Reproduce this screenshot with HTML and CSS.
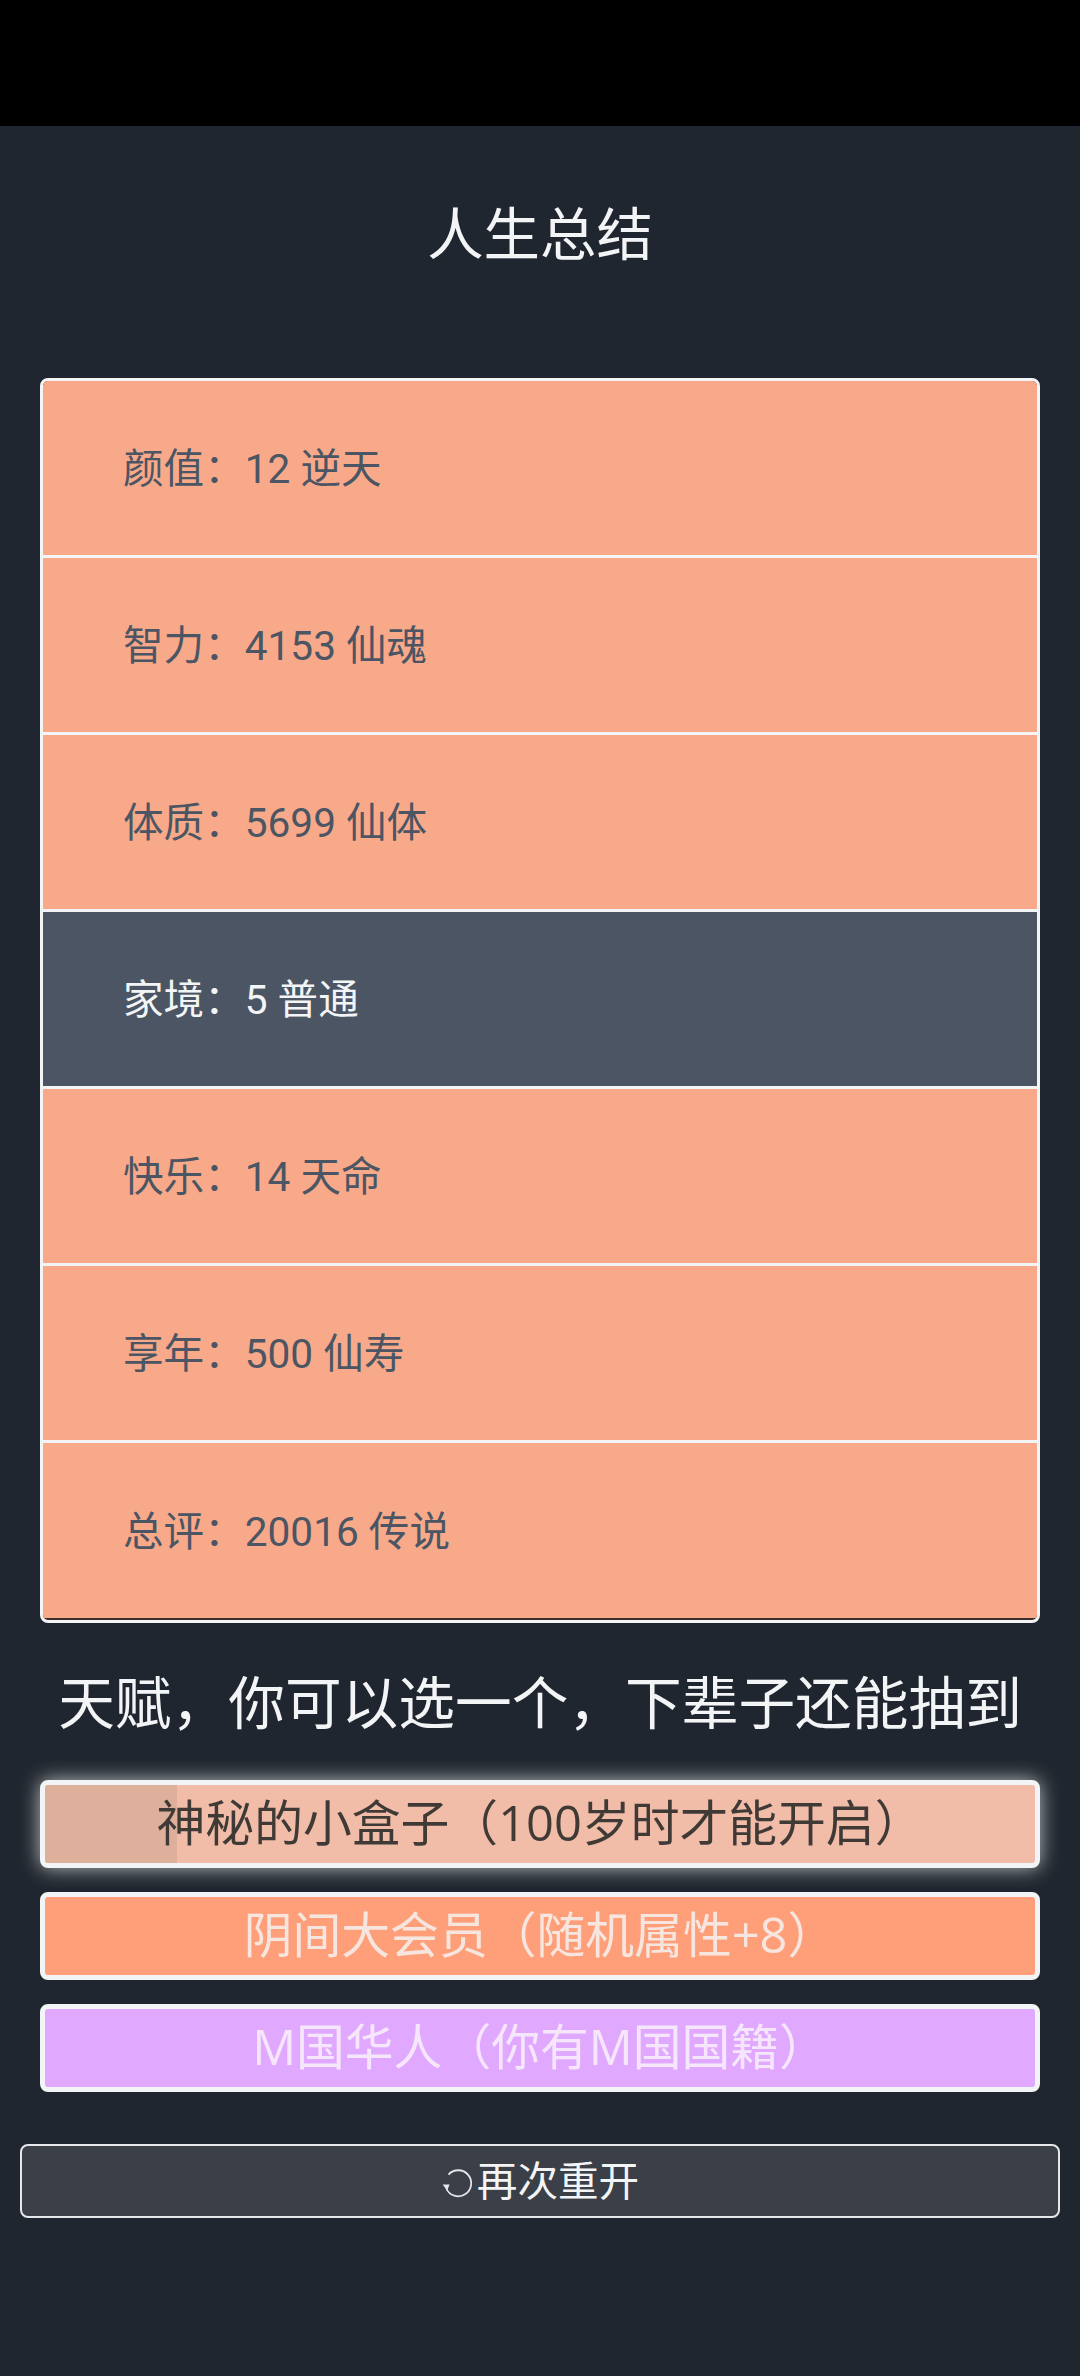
FILE: index.html
```html
<!DOCTYPE html>
<html lang="zh-CN">
<head>
<meta charset="utf-8">
<title>人生总结</title>
<link rel="stylesheet" href="styles.css">
</head>
<body>
<div class="statusbar"></div>
<main class="page">
  <h1 class="title">人生总结</h1>
  <ul class="summary">
    <li class="row">颜值&#xFF1A;12 逆天</li>
    <li class="row">智力&#xFF1A;4153 仙魂</li>
    <li class="row">体质&#xFF1A;5699 仙体</li>
    <li class="row row-dark">家境&#xFF1A;5 普通</li>
    <li class="row">快乐&#xFF1A;14 天命</li>
    <li class="row">享年&#xFF1A;500 仙寿</li>
    <li class="row">总评&#xFF1A;20016 传说</li>
  </ul>
  <h2 class="subtitle">天赋&#xFF0C;你可以选一个&#xFF0C;下辈子还能抽到</h2>
  <div class="talents">
    <button class="talent talent-selected"><span class="progress"></span><span class="label">神秘的小盒子&#xFF08;100岁时才能开启&#xFF09;</span></button>
    <button class="talent talent-orange"><span class="label">阴间大会员&#xFF08;随机属性+8&#xFF09;</span></button>
    <button class="talent talent-purple"><span class="label">M国华人&#xFF08;你有M国国籍&#xFF09;</span></button>
  </div>
  <button class="restart">
    <svg class="restart-icon" viewBox="0 0 32 32" width="32" height="32" aria-hidden="true"><path d="M7.5 7.6A13 13 0 1 1 5.3 21.5" fill="none" stroke="#e5e7eb" stroke-width="1.8"/><path d="M1.6 17.6 L8.6 17.4 L6.2 23.6 Z" fill="#e5e7eb"/></svg><span class="restart-label">再次重开</span>
  </button>
</main>
</body>
</html>
```
FILE: styles.css
```css
* { box-sizing: border-box; }
html, body { margin: 0; padding: 0; }
body {
  width: 1080px;
  height: 2376px;
  background: #20262f;
  font-family: Roboto, "Noto Sans CJK SC", sans-serif;
  overflow: hidden;
}
.statusbar { height: 126px; background: #000; }
.page { display: flex; flex-direction: column; align-items: center; }
.title {
  margin: 68px 0 0;
  height: 84px;
  font-size: 56.4px;
  line-height: 84px;
  font-weight: 400;
  color: #f3f4f6;
}
.summary {
  list-style: none;
  margin: 100px 0 0;
  padding: 0 0 2px;
  width: 1000px;
  border: 3px solid #f3f4f6;
  border-radius: 8px;
  overflow: hidden;
  background: #3d2f2b;
}
.row {
  height: 177px;
  padding: 0 0 5px 80px;
  display: flex;
  align-items: center;
  font-size: 40.6px;
  color: #4b5563;
  background: #f8a98a;
  border-bottom: 3px solid #f3f4f6;
}
.row:last-child { border-bottom: 0; height: 175px; }
.row-dark { background: #4b5563; color: #f3f4f6; }
.subtitle {
  margin: 34px 0 0;
  height: 84px;
  font-size: 56.7px;
  line-height: 84px;
  font-weight: 400;
  color: #f3f4f6;
  font-family: "Noto Sans CJK SC", sans-serif;
}
.talents { margin-top: 39px; display: flex; flex-direction: column; gap: 24px; width: 1000px; }
.talent {
  position: relative;
  height: 88px;
  padding: 0 0 5px;
  border: 5px solid #f3f4f6;
  border-radius: 8px;
  font-family: "Open Sans", "Noto Sans CJK SC", sans-serif;
  font-size: 48.8px;
  line-height: 74px;
  overflow: hidden;
}
.label { position: relative; }
.talent-selected {
  background: #f1bca8;
  color: #403a37;
  overflow: visible;
  box-shadow: 0 0 20px rgba(243, 244, 246, 0.75);
}
.progress {
  position: absolute;
  left: 0;
  top: 0;
  bottom: 0;
  width: 132px;
  background: #deb09c;
  border-radius: 3px 0 0 3px;
}
.talent-orange { background: #ff9f7a; color: #f6e6df; }
.talent-purple { background: #e0a8ff; color: #f5e6fb; }
.restart {
  margin-top: 52px;
  width: 1040px;
  height: 74px;
  border: 2px solid #e5e7eb;
  border-radius: 8px;
  background: #3a3f48;
  color: #f3f4f6;
  font-family: "Noto Sans CJK SC", sans-serif;
  font-size: 40.6px;
  display: flex;
  align-items: center;
  justify-content: center;
  padding: 0 0 4px;
}
.restart-icon { width: 32px; height: 32px; margin: 8px 4px 0 0; }
.restart-label { line-height: 1.2; }
```
